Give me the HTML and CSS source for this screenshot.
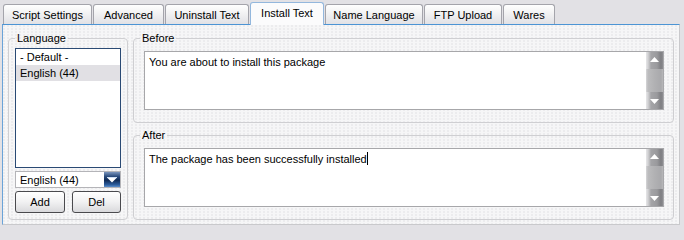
FILE: index.html
```html
<!DOCTYPE html>
<html>
<head>
<meta charset="utf-8">
<link rel="stylesheet" href="styles.css">
</head>
<body>
<div class="window">
  <div class="tabs">
    <div class="tab t1">Script Settings</div>
    <div class="tab t2">Advanced</div>
    <div class="tab t3">Uninstall Text</div>
    <div class="tab t4 active">Install Text</div>
    <div class="tab t5">Name Language</div>
    <div class="tab t6">FTP Upload</div>
    <div class="tab t7">Wares</div>
  </div>
  <div class="panel">
    <fieldset class="group lang">
      <legend>Language</legend>
      <div class="lang-body">
        <div class="listbox">
          <div class="item">- Default -</div>
          <div class="item sel">English (44)</div>
        </div>
        <div class="combo">
          <span class="combo-val">English (44)</span>
          <span class="combo-btn"><svg width="16" height="17" viewBox="0 0 16 17"><rect x="3" y="6" width="10" height="1" fill="#cfe0f5"/><polygon points="3.5,7 12.5,7 8,11.5" fill="#fff"/></svg></span>
        </div>
        <div class="buttons">
          <div class="btn add">Add</div>
          <div class="btn del">Del</div>
        </div>
      </div>
    </fieldset>
    <div class="right">
      <fieldset class="group text-group">
        <legend>Before</legend>
        <div class="memo">
          <div class="memo-text">You are about to install this package</div>
          <div class="scrollbar">
            <div class="sb-btn"><svg width="17" height="17" viewBox="0 0 17 17"><polygon points="4,10 13,10 8.5,5" fill="#fff"/></svg></div>
            <div class="sb-thumb"></div>
            <div class="sb-btn"><svg width="17" height="17" viewBox="0 0 17 17"><polygon points="4,7 13,7 8.5,12" fill="#fff"/></svg></div>
          </div>
        </div>
      </fieldset>
      <fieldset class="group text-group">
        <legend>After</legend>
        <div class="memo">
          <div class="memo-text">The package has been successfully installed<span class="caret"></span></div>
          <div class="scrollbar">
            <div class="sb-btn"><svg width="17" height="17" viewBox="0 0 17 17"><polygon points="4,10 13,10 8.5,5" fill="#fff"/></svg></div>
            <div class="sb-thumb"></div>
            <div class="sb-btn"><svg width="17" height="17" viewBox="0 0 17 17"><polygon points="4,7 13,7 8.5,12" fill="#fff"/></svg></div>
          </div>
        </div>
      </fieldset>
    </div>
  </div>
</div>
</body>
</html>
```
FILE: styles.css
```css
* { box-sizing: border-box; }
html, body {
  margin: 0;
  padding: 0;
  width: 684px;
  height: 231px;
  overflow: hidden;
  background: #e2e1e5;
  font-family: "Liberation Sans", Arial, sans-serif;
  font-size: 11px;
  color: #000;
}
.window {
  width: 684px;
  height: 231px;
}
.tabs {
  display: flex;
  align-items: flex-end;
  gap: 1px;
  height: 24px;
  padding-left: 3px;
  position: relative;
  z-index: 2;
}
.tab {
  height: 20px;
  border: 1px solid #a4a4ab;
  border-bottom: none;
  border-radius: 3px 3px 0 0;
  background: linear-gradient(#ffffff, #f3f3f4 40%, #e1e1e5);
  display: flex;
  align-items: center;
  justify-content: center;
  padding-top: 1px;
  white-space: nowrap;
}
.tab.active {
  height: 23px;
  margin-bottom: -1px;
  background: #fbfbfc;
  border-color: #93b7dd;
  padding-bottom: 3px;
}
.t1 { width: 89px; }
.t2 { width: 71px; }
.t3 { width: 84px; }
.t4 { width: 74px; }
.t5 { width: 98px; }
.t6 { width: 78px; }
.t7 { width: 52px; }

.panel {
  margin-left: 2px;
  width: 678px;
  height: 201px;
  border: 1px solid #c9c9cc;
  border-top-color: #4c94d4;
  border-left-color: #6aa3d8;
  background-color: #f6f6f7;
  background-image: radial-gradient(circle at 1px 1px, #ececee 0.8px, transparent 1.2px);
  background-size: 4px 3px;
  padding: 7px 5px 4px 5px;
  display: flex;
  gap: 5px;
}
.group {
  margin: 0;
  padding: 0;
  border: 1px solid #cfcfd2;
  border-radius: 4px;
  min-width: 0;
}
.group legend {
  margin-left: 6px;
  padding: 0 2px;
  line-height: 13px;
  height: 13px;
}
.lang {
  width: 120px;
  height: 188px;
}
.lang-body {
  padding: 3px 6px 0 6px;
  display: flex;
  flex-direction: column;
  gap: 3px;
}
.listbox {
  height: 120px;
  border: 1px solid #2a4a74;
  background: #fff;
}
.item {
  height: 16px;
  line-height: 16px;
  padding-left: 4px;
}
.item.sel {
  background: #e1e0e4;
}
.combo {
  height: 17px;
  border: 1px solid #b4b4b8;
  background: #fff;
  display: flex;
  align-items: center;
}
.combo-val {
  flex: 1;
  padding-left: 4px;
}
.combo-btn {
  width: 16px;
  height: 15px;
  background: linear-gradient(#7a95bd, #2a4b7c 30%, #0f2a55 55%, #2c5e9e 85%, #5d8fcc);
  display: flex;
  align-items: center;
  justify-content: center;
  overflow: hidden;
}
.combo-btn svg { display: block; }
.buttons {
  display: flex;
  justify-content: space-between;
}
.btn {
  height: 22px;
  border: 1px solid #4a4a4e;
  border-radius: 3px;
  background: linear-gradient(#ffffff, #f1f1f2 50%, #d9d9dc);
  display: flex;
  align-items: center;
  justify-content: center;
}
.btn.add { width: 50px; }
.btn.del { width: 49px; }

.right {
  width: 541px;
  display: flex;
  flex-direction: column;
  gap: 6px;
}
.text-group {
  width: 541px;
  padding: 0 9px 12px 10px;
}
.text-group legend {
  margin-left: -4px;
}
.memo {
  margin-top: 6px;
  height: 59px;
  border: 1px solid #a7a7aa;
  background: #fff;
  display: flex;
}
.memo-text {
  flex: 1;
  padding: 3px 4px;
  line-height: 14px;
}
.caret {
  display: inline-block;
  width: 1px;
  height: 13px;
  background: #000;
  vertical-align: -2px;
}
.scrollbar {
  width: 17px;
  display: flex;
  flex-direction: column;
  background: #b3b3b5;
}
.sb-btn {
  height: 17px;
  background: linear-gradient(90deg, #e6e6e8 0, #d2d2d4 2px, #a4a4a7 5px, #9a9a9d 11px, #7e7e82 15px, #8f8f93);
}
.sb-btn svg { display: block; }
.sb-thumb {
  flex: 1;
  background: linear-gradient(90deg, #d6d6d8 0, #bcbcbe 2px, #b2b2b4 8px, #a9a9ac 15px, #b8b8ba);
}
```
